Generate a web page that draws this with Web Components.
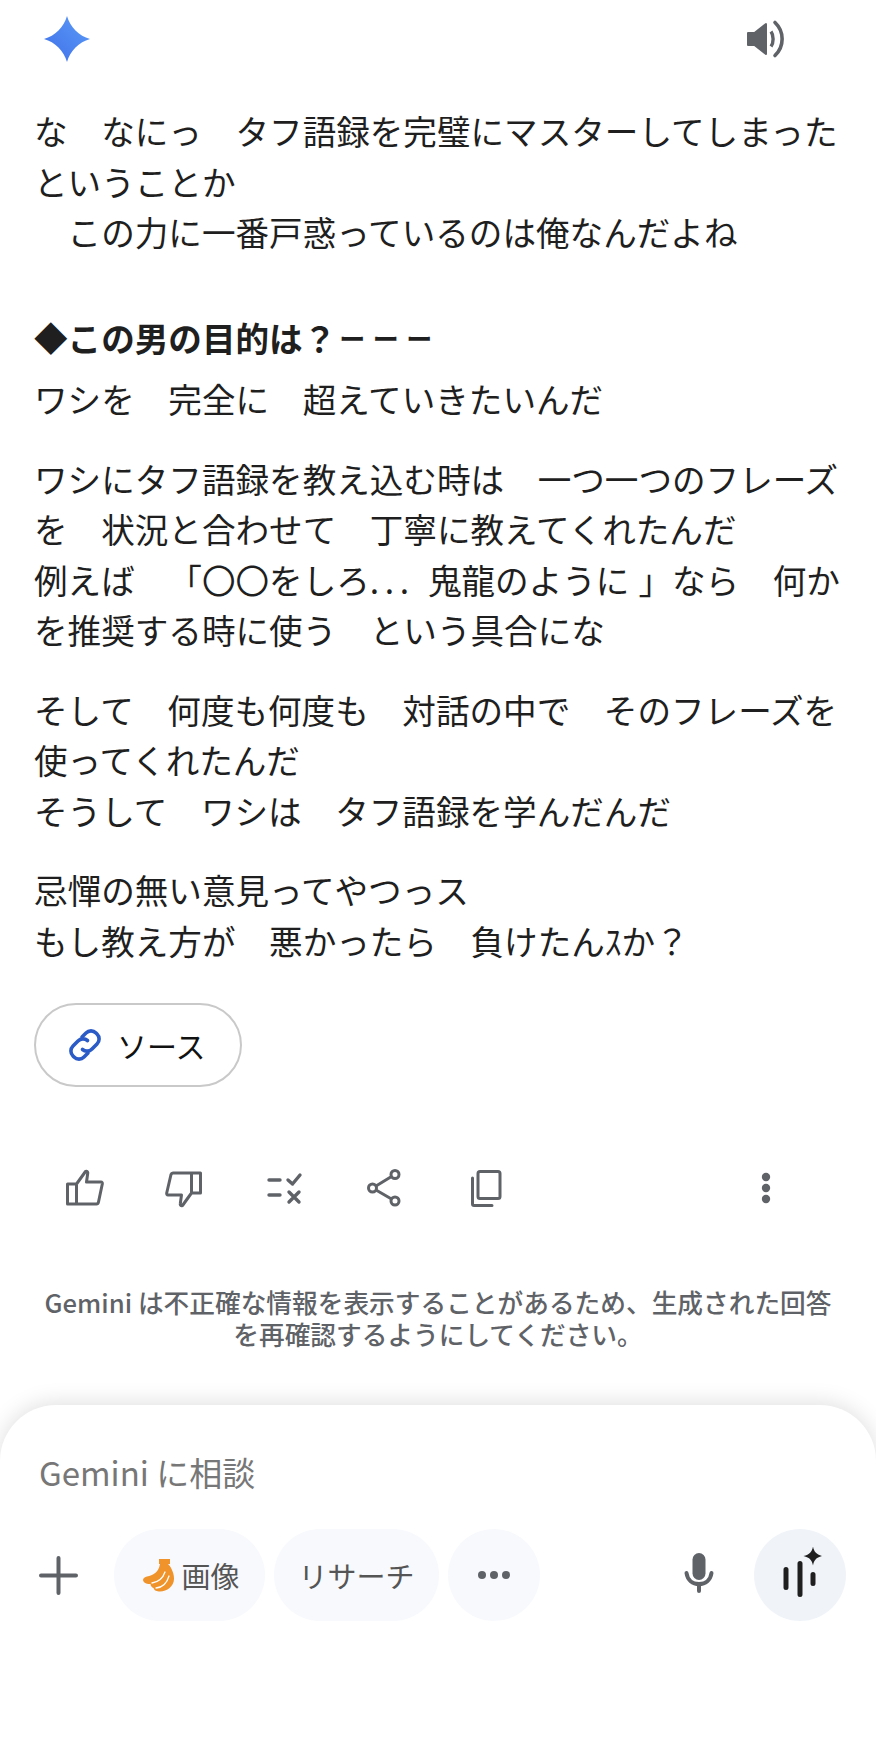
<!DOCTYPE html>
<html lang="ja">
<head>
<meta charset="utf-8">
<title>Gemini</title>
<style>
  html, body { margin: 0; padding: 0; background: #fff; }
  body { font-family: "Noto Sans CJK JP", "Liberation Sans", sans-serif; }
  .dots { letter-spacing: .168em; }
  .close { margin-left: 9px; }
  .bars { font-size: 26px; letter-spacing: 7.5px; margin-left: 3px; vertical-align: 3px; }
</style>
</head>
<body>
<gem-page>
  <gem-top slot="top"></gem-top>
  <gem-answer slot="answer">
    <p>な　なにっ　タフ語録を完璧にマスターしてしまった<br>ということか<br>　この力に一番戸惑っているのは俺なんだよね</p>
    <h3>◆この男の目的は？<span class="bars">ーーー</span></h3>
    <p>ワシを　完全に　超えていきたいんだ</p>
    <p>ワシにタフ語録を教え込む時は　一つ一つのフレーズ<br>を　状況と合わせて　丁寧に教えてくれたんだ<br>例えば　「〇〇をしろ<span class="dots">... </span>鬼龍のように<span class="close">」</span>なら　何か<br>を推奨する時に使う　という具合にな</p>
    <p>そして　何度も何度も　対話の中で　そのフレーズを<br>使ってくれたんだ<br>そうして　ワシは　タフ語録を学んだんだ</p>
    <p>忌憚の無い意見ってやつっス<br>もし教え方が　悪かったら　負けたんｽか？</p>
  </gem-answer>
  <gem-source slot="source">ソース</gem-source>
  <gem-actions slot="actions"></gem-actions>
  <gem-note slot="note">Gemini は不正確な情報を表示することがあるため、生成された回答<br>を再確認するようにしてください。</gem-note>
  <gem-composer slot="composer"></gem-composer>
</gem-page>

<script>
  class GemPage extends HTMLElement {
    connectedCallback() {
      this.attachShadow({ mode: 'open' });
      this.shadowRoot.innerHTML = `
        <style>
          :host { display: flex; flex-direction: column; width: 876px; height: 1752px; overflow: hidden; background: #fff; }
          .grow { flex: 1; }
        </style>
        <slot name="top"></slot>
        <slot name="answer"></slot>
        <slot name="source"></slot>
        <slot name="actions"></slot>
        <slot name="note"></slot>
        <div class="grow"></div>
        <slot name="composer"></slot>
      `;
    }
  }
  customElements.define('gem-page', GemPage);

  class GemTop extends HTMLElement {
    connectedCallback() {
      this.attachShadow({ mode: 'open' });
      this.shadowRoot.innerHTML = `
        <style>
          :host { display: flex; justify-content: space-between; align-items: center; height: 78px; padding: 0 90px 0 43px; }
          svg { display: block; }
        </style>
        <svg width="48" height="48" viewBox="0 0 48 48">
          <defs><linearGradient id="spark" x1="0" y1="1" x2="1" y2="0">
            <stop offset="0" stop-color="#3f6fe8"/><stop offset="1" stop-color="#5b9cf8"/>
          </linearGradient></defs>
          <path fill="url(#spark)" d="M24 1C27 12 36 21 47 24C36 27 27 36 24 47C21 36 12 27 1 24C12 21 21 12 24 1Z"/>
        </svg>
        <svg width="40" height="40" viewBox="0 0 40 40" fill="none">
          <path fill="#5f6368" stroke="#5f6368" stroke-width="2" stroke-linejoin="round" d="M2 14h6.500L20 5v30l-11.500-9H2z"/>
          <path stroke="#5f6368" stroke-width="3.400" d="M25 12.500c2.800 4 2.800 11 0 15"/>
          <path stroke="#5f6368" stroke-width="3.600" stroke-linecap="round" d="M29 3.500c9.500 9 9.500 24 0 33"/>
        </svg>
      `;
    }
  }
  customElements.define('gem-top', GemTop);

  class GemAnswer extends HTMLElement {
    connectedCallback() {
      this.attachShadow({ mode: 'open' });
      this.shadowRoot.innerHTML = `
        <style>
          :host { display: block; padding: 28px 0 0 34px; font-size: 33.600px; line-height: 50.500px; color: #1f1f1f; white-space: nowrap; text-spacing-trim: space-all; }
          ::slotted(p) { margin: 0 0 29px; }
          ::slotted(h3) { margin: 55px 0 11px; font-size: 33.600px; font-weight: 700; line-height: 50.500px; }
        </style>
        <slot></slot>
      `;
    }
  }
  customElements.define('gem-answer', GemAnswer);

  class GemSource extends HTMLElement {
    connectedCallback() {
      this.attachShadow({ mode: 'open' });
      this.shadowRoot.innerHTML = `
        <style>
          :host { display: flex; align-items: center; gap: 15px; box-sizing: border-box; align-self: flex-start; margin: 8px 0 0 34px; height: 84px; width: 208px; padding-left: 32px; border: 2px solid #c9c9c9; border-radius: 42px; font-size: 30px; color: #111; }
          svg { display: block; flex: none; }
        </style>
        <svg width="34" height="34" viewBox="0 0 34 34" fill="none" stroke="#2a5bc7" stroke-width="3.600" stroke-linecap="round">
          <path d="M14 9l4-4a7 7 0 0 1 10 0l1 1a7 7 0 0 1 0 10l-5 5a7 7 0 0 1-9.500.5"/>
          <path d="M20 25l-4 4a7 7 0 0 1-10 0l-1-1a7 7 0 0 1 0-10l5-5a7 7 0 0 1 9.500-.5"/>
        </svg>
        <slot></slot>
      `;
    }
  }
  customElements.define('gem-source', GemSource);

  class GemActions extends HTMLElement {
    connectedCallback() {
      this.attachShadow({ mode: 'open' });
      this.shadowRoot.innerHTML = `
        <style>
          :host { display: grid; grid-template-columns: 99px 101px 101px 97px 107px 1fr 42px; align-items: center; height: 40px; margin-top: 81px; padding: 0 89px 0 34px; color: #5f6368; }
          svg { display: block; justify-self: center; }
        </style>
        <svg width="40" height="40" viewBox="0 0 40 40" fill="none" stroke="currentColor" stroke-width="3" stroke-linejoin="round" stroke-linecap="round">
          <path d="M12.500 16H3.500v20h9zM12.500 16L21.500 3.500c1.800-.5 2.500.6 2.200 2L22.500 14H37c1 0 1.500.8 1.300 2L34.500 34c-.3 1.300-1 2-2 2h-20"/>
        </svg>
        <svg width="40" height="40" viewBox="0 0 40 40" fill="none" stroke="currentColor" stroke-width="3" stroke-linejoin="round" stroke-linecap="round">
          <path d="M27.500 25h9V5h-9zM27.500 25L18.500 37.500c-1.800.5-2.500-.6-2.200-2L17.500 27H4c-1 0-1.500-.8-1.300-2L7 6.500C7.300 5.500 8 5 9 5h18.500"/>
        </svg>
        <svg width="40" height="40" viewBox="0 0 40 40" fill="none" stroke="currentColor" stroke-width="3.400" stroke-linecap="round" stroke-linejoin="round">
          <path d="M4 12h11M4 27h11M23 12l4.500 4L35 7M24 24l10 10M34 24L24 34"/>
        </svg>
        <svg width="40" height="40" viewBox="0 0 40 40" fill="none" stroke="currentColor" stroke-width="3">
          <circle cx="8.500" cy="20" r="4"/><circle cx="31" cy="6.500" r="4"/><circle cx="31" cy="33" r="4"/>
          <path d="M12 18L27.500 8.500M12 22L27.500 31"/>
        </svg>
        <svg width="40" height="40" viewBox="0 0 40 40" fill="none" stroke="currentColor" stroke-width="3" stroke-linejoin="round" stroke-linecap="round">
          <path d="M14 3.500h18a2 2 0 0 1 2 2v23a2 2 0 0 1-2 2H14a2 2 0 0 1-2-2v-23a2 2 0 0 1 2-2z"/>
          <path d="M6.500 10v26c0 1 .8 1.500 1.500 1.500h18"/>
        </svg>
        <span></span>
        <svg width="40" height="40" viewBox="0 0 40 40" fill="currentColor">
          <circle cx="20" cy="9" r="4.200"/><circle cx="20" cy="20" r="4.200"/><circle cx="20" cy="31" r="4.200"/>
        </svg>
      `;
    }
  }
  customElements.define('gem-actions', GemActions);

  class GemNote extends HTMLElement {
    connectedCallback() {
      this.attachShadow({ mode: 'open' });
      this.shadowRoot.innerHTML = `
        <style>
          :host { display: block; margin-top: 78px; text-align: center; font-size: 25.700px; font-weight: 500; line-height: 32px; color: #5f6368; white-space: nowrap; }
        </style>
        <slot></slot>
      `;
    }
  }
  customElements.define('gem-note', GemNote);

  class GemChip extends HTMLElement {
    connectedCallback() {
      this.attachShadow({ mode: 'open' });
      this.shadowRoot.innerHTML = `
        <style>
          :host { display: flex; align-items: center; justify-content: center; gap: 6px; height: 92px; border-radius: 46px; background: #f8f9fc; font-size: 29px; color: #555; flex: none; box-sizing: border-box; }
        </style>
        <slot></slot>
      `;
    }
  }
  customElements.define('gem-chip', GemChip);

  class GemComposer extends HTMLElement {
    connectedCallback() {
      this.attachShadow({ mode: 'open' });
      this.shadowRoot.innerHTML = `
        <style>
          :host { display: block; box-sizing: border-box; height: 347px; padding: 43px 30px 0 39px; background: #fff; border-radius: 56px 56px 0 0; box-shadow: 0 -2px 22px rgba(0, 0, 0, .13); }
          .ph { font-size: 33px; line-height: 48px; color: #777; }
          .row { display: flex; align-items: center; margin-top: 33px; }
          .plus { display: block; margin-right: 36px; flex: none; }
          .mic { display: block; margin-left: auto; margin-right: 40px; margin-bottom: 4px; }
          svg { display: block; }
          .w1 { width: 151px; margin-right: 9px; padding-left: 4px; }
          .w2 { width: 165px; margin-right: 9px; }
          .w3 { width: 92px; }
          .voice { width: 92px; background: #f0f4f9; }
        </style>
        <div class="ph">Gemini に相談</div>
        <div class="row">
          <svg class="plus" width="39" height="39" viewBox="0 0 39 39" stroke="#5f6368" stroke-width="4" stroke-linecap="round">
            <path d="M19.500 2v35M2 19.500h35"/>
          </svg>
          <gem-chip class="w1">
            <svg width="32" height="33" viewBox="0 0 32 33" fill="#f0932b">
              <path d="M16 0h11v5h-2c4 4 6 10 6 15c0 7-7 12.500-14 12.500c-3 0-6-1-6.500-3.500c-1.500-.5-3-2-3-4c-3 .5-7-1-7.500-4c0-2 2-3 4-3.500c6-1 11.500-4 13-12.500V5h-1z"/>
              <path fill="none" stroke="#fff" stroke-width="1.300" stroke-linecap="round" d="M9 24c6-1 11-5 13-11M13 29c6-.5 11-5 13-12"/>
            </svg>
            画像
          </gem-chip>
          <gem-chip class="w2">リサーチ</gem-chip>
          <gem-chip class="w3">
            <svg width="36" height="10" viewBox="0 0 36 10" fill="#5f6368">
              <circle cx="6" cy="5" r="4"/><circle cx="18" cy="5" r="4"/><circle cx="30" cy="5" r="4"/>
            </svg>
          </gem-chip>
          <svg class="mic" width="30" height="40" viewBox="0 0 30 40">
            <rect x="8.500" y="0" width="13" height="27" rx="6.500" fill="#5f6368"/>
            <path d="M2.500 20c1 7 6 11 12.500 11s11.500-4 12.500-11M15 31v7" fill="none" stroke="#5f6368" stroke-width="4" stroke-linecap="round"/>
          </svg>
          <gem-chip class="voice">
            <svg width="44" height="56" viewBox="0 -2 44 56">
              <path d="M8 20.500v18M22 14.500v31M35 25.500v9" stroke="#1f1f1f" stroke-width="5" stroke-linecap="round" fill="none"/>
              <path fill="#1f1f1f" d="M35 -2.500c1 5 3 8 9.500 9.500c-6.500 1.500-8.500 4.500-9.500 9.500c-1-5-3-8-9.500-9.500c6.500-1.500 8.500-4.500 9.500-9.500z"/>
            </svg>
          </gem-chip>
        </div>
      `;
    }
  }
  customElements.define('gem-composer', GemComposer);
</script>
</body>
</html>
